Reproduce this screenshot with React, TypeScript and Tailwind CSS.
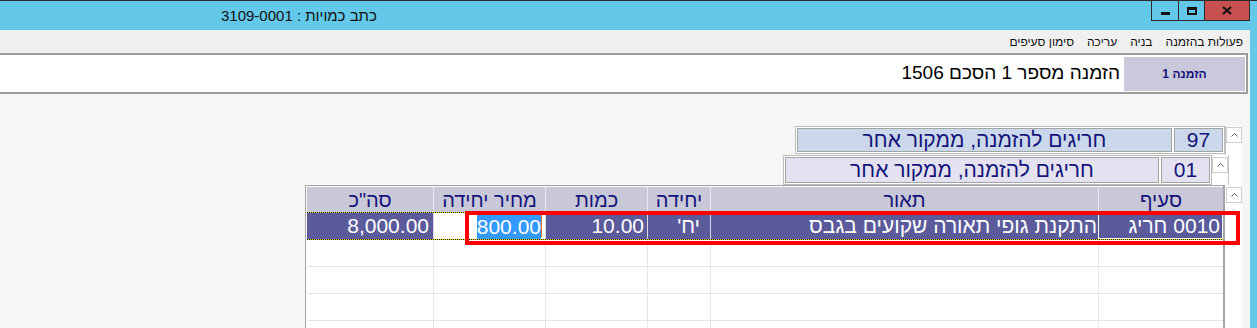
import React from 'react'

const columns = [
  { key: 'seif', label: 'סעיף', width: 'w-[125px]' },
  { key: 'desc', label: 'תאור', width: 'w-[388px]' },
  { key: 'unit', label: 'יחידה', width: 'w-[63px]' },
  { key: 'qty', label: 'כמות', width: 'w-[102px]' },
  { key: 'price', label: 'מחיר יחידה', width: 'w-[112px]' },
  { key: 'total', label: 'סה"כ', width: 'w-[126px]' },
]

const menuItems = ['פעולות בהזמנה', 'בניה', 'עריכה', 'סימון סעיפים']

function UpArrow() {
  return (
    <div className="flex h-[16px] w-[16px] items-center justify-center border border-[#d0d0d0] bg-white">
      <svg width="7" height="4" viewBox="0 0 7 4">
        <path d="M0.5 3.5 L3.5 0.5 L6.5 3.5" stroke="#5a5a5a" fill="none" strokeWidth="1" />
      </svg>
    </div>
  )
}

function Dotted() {
  return <div className="h-[1px] w-full bg-[repeating-linear-gradient(90deg,#222_0_1px,#e8e000_1px_2px)]" />
}

function TreeRow({ num, label, bg }: { num: string; label: string; bg: string }) {
  return (
    <div className="flex flex-1 gap-[2px] border border-[#bcbcbc] bg-white p-[1px]" dir="rtl">
      <div className={`flex w-[49px] items-center justify-center border border-[#a4a4a4] ${bg}`}>{num}</div>
      <div className={`flex flex-1 items-center justify-center border border-[#a4a4a4] ${bg}`}>{label}</div>
    </div>
  )
}

export default function App() {
  return (
    <div className="relative flex h-[328px] w-[1257px] flex-col overflow-hidden bg-[#64c8e9] font-['Liberation_Sans','DejaVu_Sans',sans-serif]">
      {/* title bar */}
      <div className="flex h-[30px] shrink-0 border-t border-[#2b2b2b] bg-[#64c8e9]">
        <div className="flex-1 pl-[221px] pt-[4px] text-[15px] text-[#111]">
          <span dir="rtl">כתב כמויות : 3109-0001</span>
        </div>
        <div className="mr-[7px] flex h-[20px] border-x border-b border-[#2a2a2a]">
          <div className="flex w-[27px] items-center justify-center border-r border-[#2a2a2a]">
            <div className="mt-[5px] h-[3px] w-[9px] bg-[#111]" />
          </div>
          <div className="flex w-[26px] items-center justify-center border-r border-[#2a2a2a]">
            <div className="h-[8px] w-[10px] border-2 border-t-[3px] border-[#111]" />
          </div>
          <div className="flex w-[44px] items-center justify-center bg-[#c75050]">
            <svg width="10" height="9" viewBox="0 0 10 9">
              <path d="M1 1 L9 8 M9 1 L1 8" stroke="#111" strokeWidth="2.2" />
            </svg>
          </div>
        </div>
      </div>

      <div className="flex flex-1">
        <div className="flex w-[1250px] flex-col bg-[#f6f6f6]">
          {/* menu */}
          <div className="flex h-[23px] items-center gap-[13px] bg-[#f0f0f0] pr-[7px] text-[12px] text-[#111]" dir="rtl">
            {menuItems.map((m) => (
              <span key={m}>{m}</span>
            ))}
          </div>

          {/* header panel */}
          <div className="mr-[2px] flex h-[41px] border-t-2 border-r-2 border-b-2 border-[#9c9c9c] bg-white" dir="rtl">
            <div className="mr-[1px] mt-[2px] flex h-[34px] w-[121px] items-center justify-center bg-[#c9c9db] text-[12px] font-bold text-[#14147a]">
              הזמנה 1
            </div>
            <div className="flex items-center pr-[4px] text-[19px] text-black">הזמנה מספר 1 הסכם 1506</div>
          </div>

          {/* body */}
          <div className="flex flex-1 flex-col pt-[32px]">
            <div className="flex justify-end pr-[8px] text-[21px] text-[#14147a]">
              <div className="flex">
                <div className="flex w-[430px] flex-col">
                  <div className="flex h-[28px]">
                    <TreeRow num="97" label="חריגים להזמנה, ממקור אחר" bg="bg-[#cbd7ea]" />
                  </div>
                  <div className="relative z-10 -ml-[12px] -mr-[4px] mt-[1px] flex h-[30px] bg-white">
                    <TreeRow num="01" label="חריגים להזמנה, ממקור אחר" bg="bg-[#e4e2f0]" />
                    <div className="w-[17px] border-r border-[#c4c4c4] bg-white pt-[2px]">
                      <UpArrow />
                    </div>
                  </div>
                </div>
                <div className="w-[17px] border-l border-[#c4c4c4] bg-white pt-[1px]">
                  <UpArrow />
                </div>
              </div>
            </div>

            {/* table */}
            <div className="flex flex-1 justify-end pr-[8px]">
              <div className="flex w-[937px]" dir="rtl">
                <div className="w-[17px] bg-white pt-[2px]">
                  <UpArrow />
                </div>
                <div className="flex w-[920px] flex-col border-t border-r-2 border-l border-[#a4a4a4] bg-white pl-[1px] pt-[1px]">
                  <div className="flex h-[25px] bg-[#c8c8d8] text-[20px] text-[#14147a]">
                    {columns.map((c, i) => (
                      <div
                        key={c.key}
                        className={`${c.width} flex items-center justify-center ${i < columns.length - 1 ? 'border-l border-[#e8e8f0]' : ''}`}
                      >
                        {c.label}
                      </div>
                    ))}
                  </div>

                  <Dotted />
                  <div className="flex h-[26px] text-[21px] text-white">
                    <div className="flex w-[125px] items-center border border-white bg-[#5b5b9b] pr-[2px]">0010 חריג</div>
                    <div className="flex w-[388px] items-center border-l border-[#d8d8e8] bg-[#5b5b9b] pr-[1px]">
                      התקנת גופי תאורה שקועים בגבס
                    </div>
                    <div className="flex w-[63px] items-center border-l border-[#d8d8e8] bg-[#5b5b9b] pr-[10px]">יח'</div>
                    <div className="flex w-[102px] items-center border-l border-[#d8d8e8] bg-[#5b5b9b] pr-[3px]">
                      <span dir="ltr">10.00</span>
                    </div>
                    <div className="flex w-[112px] items-center border-l border-[#d8d8e8] bg-white pr-[3px]">
                      <div className="h-[22px] w-[1px] bg-[#e07a20]" />
                      <span dir="ltr" className="bg-[#3399ff] leading-[25px]">800.00</span>
                    </div>
                    <div className="flex w-[126px] items-center bg-[#5b5b9b] pr-[4px]">
                      <span dir="ltr">8,000.00</span>
                    </div>
                  </div>
                  <Dotted />

                  {[0, 1, 2, 3].map((r) => (
                    <div key={r} className="flex h-[27px] border-b border-[#e6e6e6]">
                      {columns.map((c, i) => (
                        <div key={c.key} className={`${c.width} ${i < columns.length - 1 ? 'border-l border-[#e6e6e6]' : ''}`} />
                      ))}
                    </div>
                  ))}
                </div>
              </div>
            </div>
          </div>
        </div>
        <div className="w-[7px] bg-[#64c8e9]" />
      </div>

      {/* highlight annotation */}
      <div className="absolute left-[465px] top-[211px] h-[34px] w-[775px] border-4 border-[#ff0000]" />
    </div>
  )
}
